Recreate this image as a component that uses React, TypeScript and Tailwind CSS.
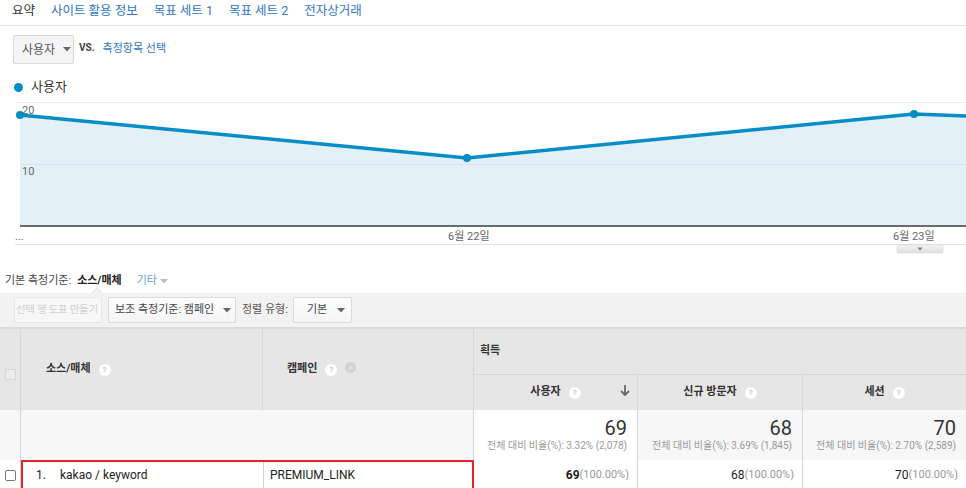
const FONT = { fontFamily: "Roboto, 'Noto Sans CJK KR', 'Liberation Sans', sans-serif" };

function Help({ dark = false }: { dark?: boolean }) {
  return (
    <span
      className={
        'inline-flex h-[12px] w-[12px] items-center justify-center rounded-full text-[8px] font-bold leading-none ' +
        (dark ? 'bg-[#d9d9d9] text-white' : 'bg-white text-[#c8c8c8]')
      }
    >
      ?
    </span>
  );
}

function Caret({ className = '' }: { className?: string }) {
  return (
    <svg width="8" height="5" viewBox="0 0 8 5" className={'shrink-0 ' + className}>
      <path d="M0 0h8L4 4.5z" fill="#666" />
    </svg>
  );
}

function Chart() {
  // values -> y: 0 at 128, 10 at 66
  const pts = [
    [20, 17],
    [467, 60],
    [914, 16],
    [966, 18],
  ];
  const line = pts.map((p) => p.join(',')).join(' ');
  const area = `20,128 ${line} 966,128`;
  return (
    <svg width="966" height="160" className="mt-[3px] block">
      <defs>
        <linearGradient id="tab" x1="0" y1="0" x2="0" y2="1">
          <stop offset="0" stopColor="#f4f4f4" />
          <stop offset="1" stopColor="#dedede" />
        </linearGradient>
      </defs>
      <line x1="15" y1="4.5" x2="966" y2="4.5" stroke="#ececec" />
      <polygon points={area} fill="#e4f0f7" />
      <line x1="20" y1="66.5" x2="966" y2="66.5" stroke="#d6e3ec" />
      <line x1="20" y1="128" x2="966" y2="128" stroke="#6b6b6b" strokeWidth="2" />
      <polyline points={line} fill="none" stroke="#058dc7" strokeWidth="3.5" strokeLinejoin="round" />
      {pts.slice(0, 3).map(([x, y]) => (
        <circle key={x} cx={x} cy={y} r="4" fill="#058dc7" />
      ))}
      <g fill="#666" fontSize="11" style={FONT}>
        <text x="22" y="16">20</text>
        <text x="22" y="77">10</text>
        <text x="15" y="142">...</text>
        <text x="448" y="142">6월 22일</text>
        <text x="893" y="142">6월 23일</text>
      </g>
      <line x1="15" y1="146.5" x2="966" y2="146.5" stroke="#e2e2e2" />
      <rect x="897" y="147" width="46" height="8" rx="1" fill="url(#tab)" stroke="#d4d4d4" strokeWidth="0.5" />
      <path d="M917 149.5h6l-3 3z" fill="#888" />
    </svg>
  );
}

export default function App() {
  return (
    <div className="h-[488px] w-[966px] overflow-hidden bg-white text-[#333]" style={FONT}>
      {/* tabs */}
      <div className="flex h-[26px] items-center gap-[16px] border-b border-[#e3e3e3] pb-[3px] pl-[12px] text-[12.5px] text-[#2f76c2]">
        <span className="text-[#333]">요약</span>
        <span>사이트 활용 정보</span>
        <span>목표 세트 1</span>
        <span>목표 세트 2</span>
        <span>전자상거래</span>
      </div>

      {/* metric select */}
      <div className="mt-[9px] flex h-[29px] items-start pl-[13px]">
        <div className="flex h-[29px] w-[61px] items-center gap-[8px] rounded-[2px] border border-[#d9d9d9] bg-[#f5f5f5] pl-[8px] text-[12px] text-[#555]">
          사용자 <Caret />
        </div>
        <span className="ml-[5px] mt-[5px] text-[10px] font-bold text-[#444]">VS.</span>
        <span className="ml-[8px] mt-[6px] text-[11px] text-[#2f76c2]">측정항목 선택</span>
      </div>

      {/* legend */}
      <div className="mt-[15px] flex h-[16px] items-center gap-[5px] pl-[14px] text-[13px] text-[#333]">
        <span className="h-[9px] w-[9px] rounded-full bg-[#058dc7]" />
        <span className="ml-[3px]">사용자</span>
      </div>

      <Chart />

      {/* dimension */}
      <div className="mt-[15px] flex h-[16px] items-center pl-[5px] text-[11px] text-[#444]">
        <span>기본 측정기준:</span>
        <span className="ml-[6px] font-bold text-[#222]">소스/매체</span>
        <span className="ml-[15px] text-[#6b9fd8]">기타</span>
        <svg width="8" height="5" viewBox="0 0 8 5" className="ml-[3px]">
          <path d="M0 0h8L4 4.5z" fill="#bbb" />
        </svg>
      </div>

      {/* toolbar */}
      <div className="relative mt-[4px] flex h-[34px] items-center bg-[#f2f2f2] pl-[14px] text-[11px]">
        <span className="absolute left-[93px] top-[-4px] h-[8px] w-[8px] rotate-45 border-l border-t border-[#e6e6e6] bg-[#f2f2f2]" />
        <div className="flex h-[26px] w-[88px] items-center overflow-hidden whitespace-nowrap rounded-[2px] border border-[#e6e6e6] bg-[#f7f7f7] pl-[1px] text-[10.5px] tracking-[-0.3px] text-[#d0d0d0]">
          선택 행 도표 만들기
        </div>
        <div className="ml-[6px] flex h-[26px] w-[128px] items-center gap-[9px] whitespace-nowrap rounded-[2px] border border-[#dadada] bg-gradient-to-b from-[#fdfdfd] to-[#f5f5f5] pl-[6px] text-[#444]">
          보조 측정기준: 캠페인
          <Caret />
        </div>
        <span className="ml-[6px] text-[#555]">정렬 유형:</span>
        <div className="ml-[5px] flex h-[26px] w-[59px] items-center gap-[10px] rounded-[2px] border border-[#dadada] bg-gradient-to-b from-[#fdfdfd] to-[#f5f5f5] pl-[13px] text-[#444]">
          기본
          <Caret />
        </div>
      </div>

      {/* table */}
      <div className="grid grid-cols-[21px_242px_211px_164px_165px_1fr] grid-rows-[46px_35px_50px_30px] border-t-2 border-[#dadada] text-[11px]">
        {/* header left */}
        <div className="row-span-2 flex items-center justify-center border-r border-[#d6d6d6] bg-[#e6e6e6]">
          <span className="mt-[10px] h-[11px] w-[11px] border border-[#d6d6d6] bg-[#ececec]" />
        </div>
        <div className="row-span-2 flex items-center gap-[8px] border-r border-[#d6d6d6] bg-[#e6e6e6] pl-[25px] font-bold text-[#333]">
          소스/매체 <Help />
        </div>
        <div className="row-span-2 flex items-center border-r border-[#d6d6d6] bg-[#e6e6e6] pl-[24px] font-bold text-[#333]">
          캠페인
          <span className="ml-[8px]">
            <Help />
          </span>
          <span className="mb-[4px] ml-[8px] inline-flex h-[11px] w-[11px] items-center justify-center rounded-full bg-[#d2d2d2] text-[8px] leading-none text-[#ececec]">
            ×
          </span>
        </div>
        <div className="col-span-3 flex items-center border-b border-[#d6d6d6] bg-[#e6e6e6] pl-[6px] font-bold text-[#333]">
          획득
        </div>
        {/* sub header */}
        <div className="relative flex items-center justify-center gap-[8px] border-r border-[#d6d6d6] bg-[#e6e6e6] font-bold">
          사용자 <Help />
          <svg width="10" height="12" viewBox="0 0 10 12" className="absolute right-[7px] top-[10px]">
            <path d="M5 0v10M1 6l4 4 4-4" fill="none" stroke="#666" strokeWidth="1.8" />
          </svg>
        </div>
        <div className="flex items-center justify-center gap-[8px] border-r border-[#d6d6d6] bg-[#e6e6e6] font-bold">
          신규 방문자 <Help />
        </div>
        <div className="flex items-center justify-center gap-[8px] bg-[#e6e6e6] font-bold">
          세션 <Help />
        </div>

        {/* totals */}
        <div className="border-r border-[#d6d6d6] bg-[#f7f7f7]" />
        <div className="col-span-2 border-r border-[#d6d6d6] bg-[#f7f7f7]" />
        {[
          ['69', '3.32% (2,078)', 'bg-white'],
          ['68', '3.69% (1,845)', 'bg-[#f7f7f7]'],
          ['70', '2.70% (2,589)', 'bg-[#f7f7f7]'],
        ].map(([v, s, bg], i) => (
          <div
            key={v}
            className={'flex flex-col items-end justify-center pr-[10px] ' + bg + (i < 2 ? ' border-r border-[#d6d6d6]' : '')}
          >
            <span className="text-[20px] leading-[22px] text-[#333]">{v}</span>
            <span className="whitespace-nowrap text-[10px] leading-[14px] text-[#999]">전체 대비 비율(%): {s}</span>
          </div>
        ))}

        {/* row 1 */}
        <div className="flex items-center justify-center border-r border-[#d6d6d6]">
          <span className="h-[11px] w-[11px] rounded-[2px] border border-[#777] bg-white" />
        </div>
        <div className="col-span-2 grid grid-cols-[241px_1fr] border-2 border-[#e0242b] text-[12px] text-[#222]">
          <div className="flex items-center border-r border-[#d6d6d6] pl-[13px]">
            <span className="w-[24px]">1.</span>kakao / keyword
          </div>
          <div className="flex items-center pl-[6px]">PREMIUM_LINK</div>
        </div>
        {['69', '68', '70'].map((v, i) => (
          <div
            key={v}
            className={'flex items-center justify-end pr-[8px] text-[12px] ' + (i < 2 ? 'border-r border-[#d6d6d6]' : '')}
          >
            <span className={i === 0 ? 'font-bold text-[#222]' : 'text-[#222]'}>{v}</span>
            <span className="text-[11px] text-[#999]">(100.00%)</span>
          </div>
        ))}
      </div>
    </div>
  );
}
